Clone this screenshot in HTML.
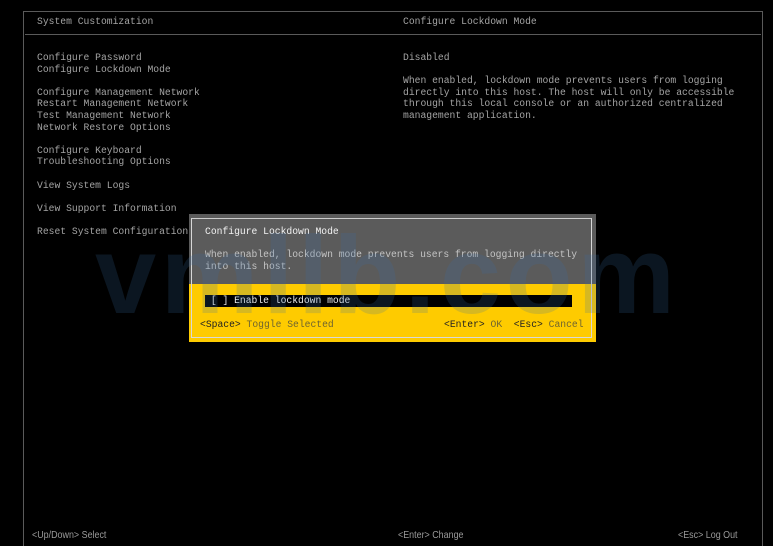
<!DOCTYPE html>
<html><head><meta charset="utf-8"><style>
html,body{margin:0;padding:0;background:#000;width:773px;height:546px;overflow:hidden;position:relative}
.m{position:absolute;font-family:"Liberation Mono","DejaVu Sans Mono",monospace;font-size:9.7px;line-height:11.6px;color:#a4a4a4;white-space:pre}
.ln{position:absolute;background:#5a5a5a}
.b{position:absolute;font-family:"Liberation Sans",sans-serif;font-size:10.5px;color:#9a9a9a;white-space:pre;transform:scaleX(0.85);transform-origin:left top}
</style></head><body>
<div class="ln" style="left:23px;top:11px;width:740px;height:1px"></div>
<div class="ln" style="left:23px;top:11px;width:1px;height:535px"></div>
<div class="ln" style="left:762px;top:11px;width:1px;height:535px"></div>
<div class="ln" style="left:25px;top:34px;width:736px;height:1px"></div>

<div class="m" style="left:37px;top:16px">System Customization</div>
<div class="m" style="left:403px;top:16px">Configure Lockdown Mode</div>

<div class="m" style="left:37px;top:52px">Configure Password
Configure Lockdown Mode

Configure Management Network
Restart Management Network
Test Management Network
Network Restore Options

Configure Keyboard
Troubleshooting Options

View System Logs

View Support Information

Reset System Configuration</div>

<div class="m" style="left:403px;top:52px">Disabled

When enabled, lockdown mode prevents users from logging
directly into this host. The host will only be accessible
through this local console or an authorized centralized
management application.</div>

<!-- dialog -->
<div style="position:absolute;left:189px;top:214px;width:407px;height:70px;background:#5b5b5b"></div>
<div style="position:absolute;left:189px;top:284px;width:407px;height:58px;background:#fecb00"></div>
<div style="position:absolute;left:191px;top:218px;width:401px;height:120px;border:1px solid #d8d8d8;box-sizing:border-box;border-top-color:#ccc"></div>
<div style="position:absolute;left:205px;top:295px;width:367px;height:12px;background:#000"></div>
<div class="m" style="left:205px;top:226px;color:#f2f2f2">Configure Lockdown Mode</div>
<div class="m" style="left:205px;top:249px;color:#c4c4c4">When enabled, lockdown mode prevents users from logging directly
into this host.</div>
<div class="m" style="left:205px;top:295px;color:#eaeaea"> [ ] Enable lockdown mode</div>
<div class="m" style="left:200px;top:319px;color:#222">&lt;Space&gt; <span style="color:#6e6430">Toggle Selected</span></div>
<div class="m" style="left:444px;top:319px;color:#222">&lt;Enter&gt; <span style="color:#6e6430">OK</span>  &lt;Esc&gt; <span style="color:#6e6430">Cancel</span></div>

<!-- watermark -->
<div style="position:absolute;left:95px;top:221px;font-family:'Liberation Sans',sans-serif;font-weight:bold;font-size:110px;line-height:110px;letter-spacing:4.5px;color:#3a6ea5;opacity:0.2;white-space:nowrap">vmllb.com</div>

<div class="b" style="left:32px;top:529px">&lt;Up/Down&gt; Select</div>
<div class="b" style="left:398px;top:529px">&lt;Enter&gt; Change</div>
<div class="b" style="left:678px;top:529px">&lt;Esc&gt; Log Out</div>
</body></html>
